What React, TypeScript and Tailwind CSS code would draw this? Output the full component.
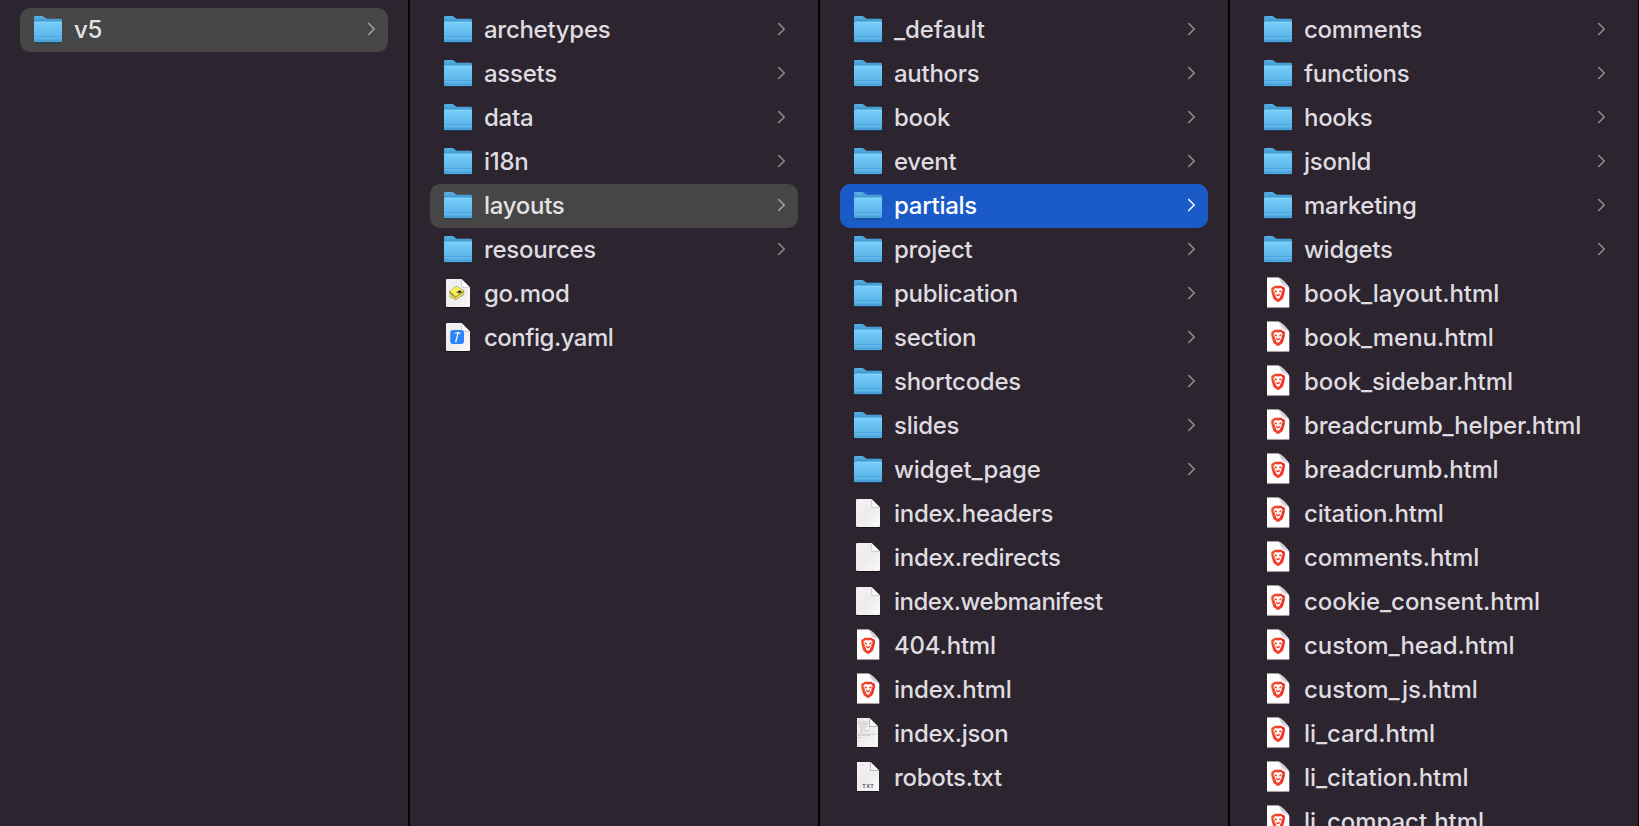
type Kind = "folder" | "blank" | "brave" | "json" | "txt" | "mod" | "yaml";
type Entry = { name: string; kind: Kind; selected?: "idle" | "active" };

const folders = (...names: string[]): Entry[] => names.map((name) => ({ name, kind: "folder" }));
const pages = (...names: string[]): Entry[] => names.map((name) => ({ name, kind: "brave" }));

const columns: Entry[][] = [
  [{ name: "v5", kind: "folder", selected: "idle" }],
  [
    ...folders("archetypes", "assets", "data", "i18n"),
    { name: "layouts", kind: "folder", selected: "idle" },
    ...folders("resources"),
    { name: "go.mod", kind: "mod" },
    { name: "config.yaml", kind: "yaml" },
  ],
  [
    ...folders("_default", "authors", "book", "event"),
    { name: "partials", kind: "folder", selected: "active" },
    ...folders("project", "publication", "section", "shortcodes", "slides", "widget_page"),
    { name: "index.headers", kind: "blank" },
    { name: "index.redirects", kind: "blank" },
    { name: "index.webmanifest", kind: "blank" },
    ...pages("404.html", "index.html"),
    { name: "index.json", kind: "json" },
    { name: "robots.txt", kind: "txt" },
  ],
  [
    ...folders("comments", "functions", "hooks", "jsonld", "marketing", "widgets"),
    ...pages(
      "book_layout.html",
      "book_menu.html",
      "book_sidebar.html",
      "breadcrumb_helper.html",
      "breadcrumb.html",
      "citation.html",
      "comments.html",
      "cookie_consent.html",
      "custom_head.html",
      "custom_js.html",
      "li_card.html",
      "li_citation.html",
      "li_compact.html",
    ),
  ],
];

function Defs() {
  return (
    <svg className="absolute h-0 w-0" aria-hidden="true">
      <defs>
        <linearGradient id="folderFront" x1="0" y1="0" x2="0" y2="1">
          <stop offset="0" stopColor="#7dd2fa" />
          <stop offset="0.1" stopColor="#72caf7" />
          <stop offset="0.7" stopColor="#5fb8ec" />
          <stop offset="1" stopColor="#4ba6de" />
        </linearGradient>
        <linearGradient id="folderBack" x1="0" y1="0" x2="0" y2="1">
          <stop offset="0" stopColor="#5ab2e4" />
          <stop offset="0.5" stopColor="#3f94ce" />
          <stop offset="1" stopColor="#3f94ce" />
        </linearGradient>
        <linearGradient id="paper" x1="0" y1="0" x2="1" y2="1">
          <stop offset="0" stopColor="#f4f4f4" />
          <stop offset="0.5" stopColor="#ececec" />
          <stop offset="1" stopColor="#fafafa" />
        </linearGradient>
        <linearGradient id="foldShade" x1="0" y1="1" x2="1" y2="0">
          <stop offset="0" stopColor="#ffffff" />
          <stop offset="0.55" stopColor="#c9c9c9" />
          <stop offset="1" stopColor="#ededed" />
        </linearGradient>
        <linearGradient id="shield" x1="0" y1="0" x2="1" y2="0">
          <stop offset="0" stopColor="#f4522a" />
          <stop offset="1" stopColor="#ea2f2c" />
        </linearGradient>
      </defs>
    </svg>
  );
}

function FolderArt() {
  return (
    <>
      <rect x="2.3" y="33" width="27.4" height="2.2" rx="1" fill="#000" opacity="0.45" />
      <path d="M2 9.4A1.4 1.4 0 0 1 3.4 8h6.4c1 0 1.6.3 2.3.9l1.4 1.2c.6.5 1 .7 1.9.7h13.2A1.4 1.4 0 0 1 30 12.2V20H2Z" fill="url(#folderBack)" />
      <path d="M2 14.7A1 1 0 0 1 3 13.7H29A1 1 0 0 1 30 14.7V33A1.2 1.2 0 0 1 28.8 34.2H3.2A1.2 1.2 0 0 1 2 33Z" fill="url(#folderFront)" />
      <path d="M2.5 14.2H29.5" stroke="#8bdafc" strokeWidth="0.8" />
      <path d="M2 28.5H30M2 32.5H30" stroke="#3f97cf" strokeWidth="0.8" opacity="0.7" />
      <path d="M2 29.5H30" stroke="#76c8f2" strokeWidth="0.7" opacity="0.7" />
    </>
  );
}

function PaperArt() {
  return (
    <>
      <path d="M4.5 34H27.5V35.2a.8.8 0 0 1-.8.8H5.3a.8.8 0 0 1-.8-.8Z" fill="#000" opacity="0.45" />
      <path d="M4 8.2A1.2 1.2 0 0 1 5.2 7H19.5L28 15.5V33.8A1.2 1.2 0 0 1 26.8 35H5.2A1.2 1.2 0 0 1 4 33.8Z" fill="url(#paper)" />
      <path d="M19.5 7V14.5A1 1 0 0 0 20.5 15.5H28Z" fill="#fff" />
      <path d="M19.7 7.5V14.3A1 1 0 0 0 20.7 15.3H27.5" fill="none" stroke="#b4b4b4" strokeWidth="0.7" />
    </>
  );
}

function ThumbArt({ right }: { right: number }) {
  const corner = right - 8.5;
  return (
    <>
      <rect x="5.3" y="34" width={right - 5.6} height="1.9" fill="#000" opacity="0.45" />
      <path d={`M5 6H${corner}L${right} 14.5V35H5Z`} fill="url(#paper)" />
      <path d={`M${corner} 6V14.5H${right}Z`} fill="#f8f8f8" />
      <path d={`M${corner} 6.5V14.5H${right - 0.4}`} fill="none" stroke="#a5a5a5" strokeWidth="0.8" />
    </>
  );
}

function LionShield() {
  return (
    <>
      <path
        d="M12.6 13.7H19.6L21 15.1 22.3 15.2 23.2 17.2 22.7 18.3 23 19.3 21.3 25.6Q20.9 27 19.8 27.800L16.900 29.700Q16.100 30.200 15.300 29.700L12.400 27.800Q11.300 27 10.900 25.600L9.200 19.300 9.500 18.300 9 17.200 9.900 15.200 11.200 15.100Z"
        fill="url(#shield)"
      />
      <path
        d="M13.3 16 16.1 16.400 18.900 16 20.600 17.800 20.400 19.300 19.200 21.300 19.500 22.900 17.900 23.700 18.300 25.200 16.100 26.900 13.900 25.200 14.300 23.700 12.700 22.900 13 21.300 11.800 19.300 11.600 17.800Z"
        fill="#fff"
      />
      <path
        d="M12.400 18.300 15 19 14.800 20.600 13 20.100ZM19.800 18.300 17.200 19 17.400 20.600 19.200 20.100ZM13.900 21.500 15.100 22.300 16.100 22.700 17.100 22.300 18.300 21.500 17.700 23.500 16.100 24.600 14.500 23.500Z"
        fill="#ef3c2c"
      />
    </>
  );
}

function FileIcon({ kind }: { kind: Kind }) {
  return (
    <svg className="h-11 w-8 shrink-0" viewBox="0 0 32 44" aria-hidden="true">
      {kind === "folder" && <FolderArt />}
      {kind === "blank" && <PaperArt />}
      {kind === "mod" && (
        <>
          <PaperArt />
          <path d="M6.8 19.2 14.6 13.8 22.6 19 21.9 20.6 22.4 22.4 13.6 28.3 7.4 24.5 8 22.5Z" fill="#9b9550" />
          <path d="M7.3 19.1 14.7 14.2 22 19.2 13.7 24.8Z" fill="#f5ed5c" />
          <path d="M8.3 21.8 13.7 25.4 21.3 20.6 21.7 22 13.6 27.6 8.1 24.2Z" fill="#f1e75c" />
          <path d="M7 19.2 13.7 24.9 22 19.4" fill="none" stroke="#7a7540" strokeWidth="0.6" />
          <path d="M14 20.300Q17.300 17.400 20.700 19.700 17.300 22.300 14 20.300Z" fill="#77733b" />
          <circle cx="17.5" cy="19.9" r="1.300" fill="#25271c" />
          <path d="m9.3 22.8 4.3 3.3" stroke="#8b8648" strokeWidth="0.6" />
        </>
      )}
      {kind === "yaml" && (
        <>
          <PaperArt />
          <rect x="8.2" y="14" width="13.8" height="14" rx="3" fill="#2b84fb" />
          <path d="M15.9 17.4 13.8 25.9" stroke="#f4f8ff" strokeWidth="1.3" strokeLinecap="round" />
          <path d="M12.3 17.3q2.3-1.6 5.2-1.1l.9.7-.4 1.4-1.3-.4q-2-.6-4.4-.1Z" fill="#e9f0fc" />
        </>
      )}
      {kind === "brave" && (
        <>
          <path d="M5 5.5H16.5C19.5 6.5 26 12.5 27.3 16V35.5H5Z" fill="#fff" />
          <path d="M16.5 5.5C18.2 7.8 18.5 10.2 20 12.3 22 14.3 25 14 27.3 16 25.8 12.3 19.7 6.3 16.5 5.5Z" fill="url(#foldShade)" />
          <path d="M5 5.7H16.5M5 35.2H27.3" stroke="#bcbcbc" strokeWidth="0.5" />
          <LionShield />
        </>
      )}
      {kind === "json" && (
        <>
          <ThumbArt right={26} />
          <path
            d="M6 8h5M6 9.8h9M6 11.5h10M7.5 13.2h8M7.5 15h7M8.5 16.8h4M8.5 18.6h9M7.5 20.3h3M6 22.2h19M6 23.5h12M6 25.5h3"
            stroke="#b4b4b4"
            strokeWidth="0.7"
            strokeDasharray="2.5 0.7 1.3 0.5"
          />
        </>
      )}
      {kind === "txt" && (
        <>
          <ThumbArt right={27} />
          <path d="M7 9h5" stroke="#d3d3d3" strokeWidth="0.7" />
          <text x="16.2" y="31.700" textAnchor="middle" fill="#444" className="font-[Inter,sans-serif] text-[5.3px] font-semibold tracking-[0.4px]">
            TXT
          </text>
        </>
      )}
    </svg>
  );
}

function trackingFor({ name, kind }: Entry) {
  if (name.length > 20) return "tracking-[-0.16px]";
  if (name.includes("_")) return "tracking-[-0.06px]";
  if (kind === "brave") return "tracking-[-0.2px]";
  if (kind === "yaml" || name.endsWith("manifest")) return "tracking-[-0.5px]";
  if (kind === "folder") return "tracking-[-0.28px]";
  return "tracking-[-0.3px]";
}

function Row({ entry }: { entry: Entry }) {
  const tone =
    entry.selected === "active"
      ? "bg-[#1a5bc7] text-white"
      : entry.selected === "idle"
        ? "bg-[#464646] text-[#e3e3e3]"
        : "text-[#dfdce0]";
  const arrow = entry.selected === "active" ? "#f1f5fc" : entry.selected === "idle" ? "#a3a3a3" : "#918d93";
  return (
    <li className={`flex h-11 shrink-0 items-center rounded-[10px] pr-[11px] pl-3 ${tone}`}>
      <FileIcon kind={entry.kind} />
      <span className={`ml-2.5 flex-1 text-[24px] leading-[44px] font-[450] whitespace-nowrap ${trackingFor(entry)}`}>{entry.name}</span>
      {entry.kind === "folder" && (
        <svg className="h-11 w-2.5 shrink-0" viewBox="0 0 10 44" fill="none" stroke={arrow} strokeWidth="1.6" strokeLinecap="round" strokeLinejoin="round" aria-hidden="true">
          <path d="M1.7 15.500 7.200 21l-5.500 5.500" />
        </svg>
      )}
    </li>
  );
}

export default function App() {
  return (
    <main className="flex h-[826px] w-[1639px] overflow-hidden bg-[#2c242f] font-[Inter,sans-serif] antialiased">
      <Defs />
      {columns.map((entries, i) => (
        <ul key={i} className="flex w-[410px] shrink-0 flex-col border-r-2 border-black px-5 pt-2">
          {entries.map((entry) => (
            <Row key={entry.name} entry={entry} />
          ))}
        </ul>
      ))}
    </main>
  );
}
